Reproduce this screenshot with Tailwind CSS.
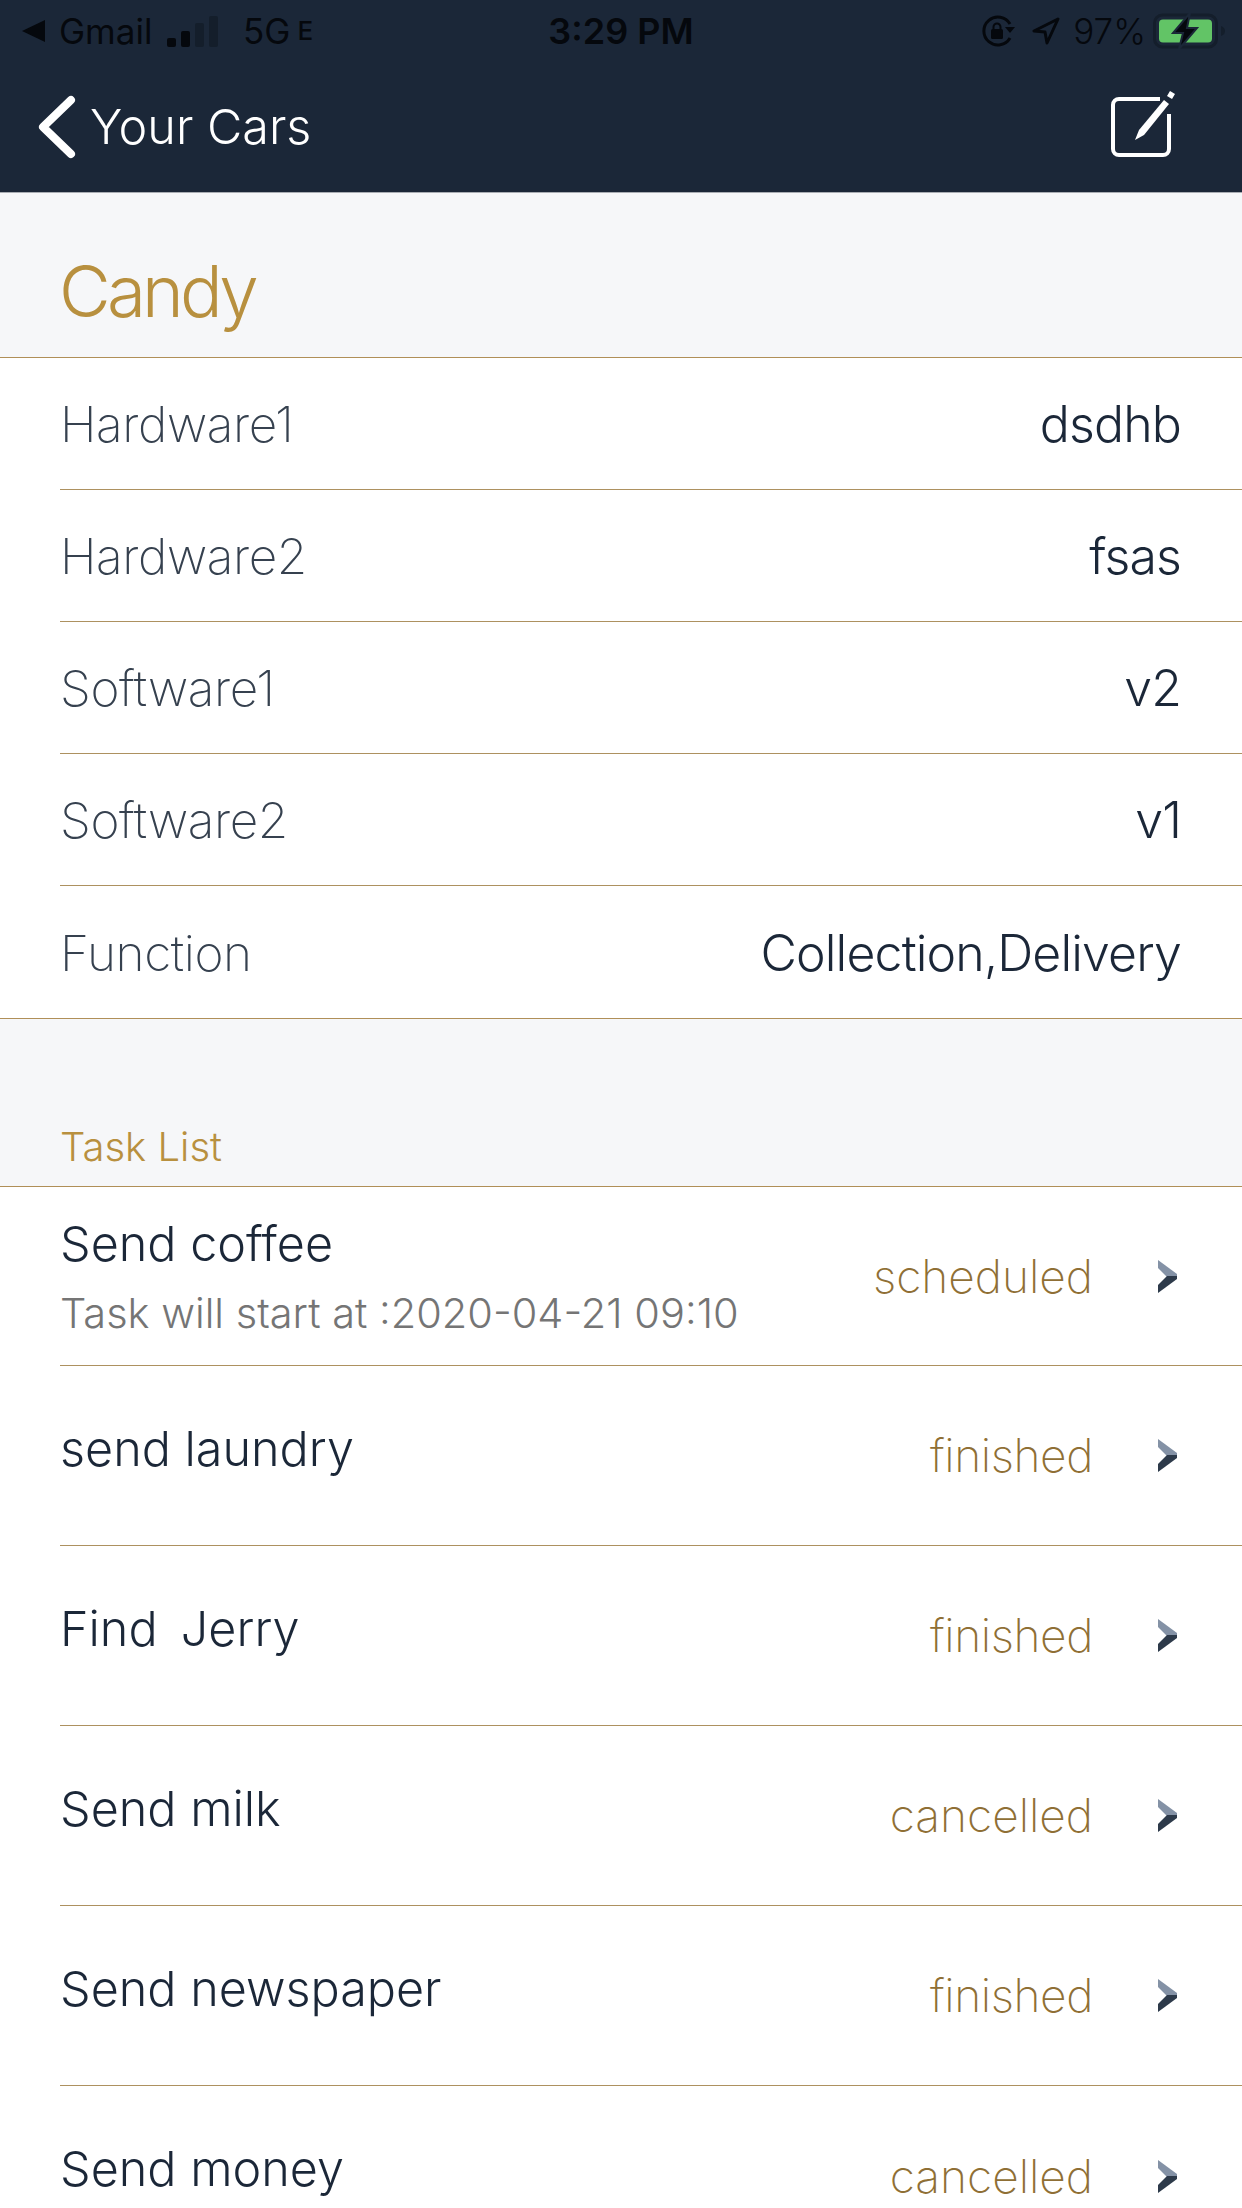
<!DOCTYPE html>
<html lang="en">
<head>
    <meta charset="UTF-8">
    <meta name="viewport" content="width=device-width, initial-scale=1.0">
    <title>Candy</title>
    <script src="https://cdn.jsdelivr.net/npm/@tailwindcss/browser@4"></script>
</head>
<body class="bg-white font-['Inter',sans-serif]">
<div class="w-[1242px] h-[2208px] overflow-hidden flex flex-col">

    <!-- status bar + nav -->
    <header class="bg-[#1b2738] h-[193px] shrink-0 border-b border-[#a9adb3]">
        <div class="h-[62px] pl-[22px] pr-[16px] grid grid-cols-3 items-center text-[#05080d] text-[35px] leading-none">
            <div class="flex items-center">
                <svg width="23" height="22" viewBox="0 0 23 22" class="mr-[14px]"><path d="M0 11 23 0v22z" fill="#05080d"/></svg>
                <span class="w-[93px]">Gmail</span>
                <svg width="51" height="31" viewBox="0 0 51 31" class="ml-[15px]">
                    <rect x="0" y="22" width="9" height="9" rx="2" fill="#05080d"/>
                    <rect x="14" y="15" width="9" height="16" rx="2" fill="#05080d"/>
                    <rect x="28" y="7" width="9" height="24" rx="2" fill="#141e2b"/>
                    <rect x="42" y="0" width="9" height="31" rx="2" fill="#141e2b"/>
                </svg>
                <span class="ml-[25px]">5G</span>
                <span class="ml-[7px] text-[26px] font-medium">E</span>
            </div>
            <div class="text-center font-semibold text-[36px] mr-[6px]">3:29 PM</div>
            <div class="flex items-center justify-end">
                <svg width="34" height="32" viewBox="0 0 34 32" fill="none" class="mr-[16px]">
                    <path d="M28 23A14 14 0 1 1 28 9" stroke="#05080d" stroke-width="3"/>
                    <path d="M28 12l-5 6h10z" fill="#05080d" transform="rotate(180 28 15)"/>
                    <rect x="9" y="14" width="12" height="10" rx="1.5" fill="#05080d"/>
                    <path d="M11.500 14v-2a3.500 3.500 0 0 1 7 0v2" stroke="#05080d" stroke-width="2"/>
                </svg>
                <svg width="28" height="28" viewBox="0 0 28 28" fill="none" class="mr-[13px]">
                    <path d="M26 2 2 14l11 1 2 11z" stroke="#05080d" stroke-width="3" stroke-linejoin="round"/>
                </svg>
                <span class="font-light mr-[7px]">97%</span>
                <svg width="73" height="36" viewBox="0 0 73 36" fill="none">
                    <rect x="1.500" y="2" width="62" height="32" rx="8" stroke="#141e2b" stroke-width="3"/>
                    <rect x="6" y="6.500" width="53" height="23" rx="4" fill="#62c466"/>
                    <path d="M37 0 20 20h10l-4 16 18-21H34z" fill="#05080d" stroke="#1b2738" stroke-width="2"/>
                    <path d="M68 13c3 1 4 3 4 5s-1 4-4 5z" fill="#141e2b"/>
                </svg>
            </div>
        </div>
        <div class="h-[130px] pl-[38px] pr-[66px] flex items-center text-white">
            <svg width="38" height="64" viewBox="0 0 38 64" fill="none">
                <path d="M33 5 5 32l28 27" stroke="#fff" stroke-width="8" stroke-linecap="round" stroke-linejoin="round"/>
            </svg>
            <span class="ml-[14px] text-[48.500px] font-light leading-none">Your Cars</span>
            <svg width="66" height="68" viewBox="0 0 66 68" fill="none" class="ml-auto mt-[-6px]">
                <path d="M50 9H9a6 6 0 0 0-6 6v44a6 6 0 0 0 6 6h44a6 6 0 0 0 6-6V24" stroke="#fff" stroke-width="4"/>
                <path d="M25 50l4-10 25-30 5 4-25 31z" fill="#fff"/>
                <path d="M60 1l5 3-3 5-5-3z" fill="#fff"/>
            </svg>
        </div>
    </header>

    <!-- car name -->
    <div class="bg-[#f6f7f9] h-[165px] shrink-0 pl-[59px] pt-[32px] flex items-center border-b border-[#b08f58]">
        <h1 class="text-[71px] font-light tracking-[-3.8px] text-[#b8903f] leading-none">Candy</h1>
    </div>

    <!-- car details -->
    <div class="shrink-0 pl-[60px]">
        <div class="h-[132px] pt-[2px] pr-[61px] flex items-center justify-between border-b border-[#ad9160]">
            <span class="text-[49.500px] font-extralight tracking-[-0.4px] text-[#36414f]">Hardware1</span>
            <span class="text-[50px] font-light tracking-[-0.85px] text-[#1b2738]">dsdhb</span>
        </div>
        <div class="h-[132px] pt-[2px] pr-[61px] flex items-center justify-between border-b border-[#ad9160]">
            <span class="text-[49.500px] font-extralight tracking-[-0.4px] text-[#36414f]">Hardware2</span>
            <span class="text-[50px] font-light tracking-[-0.85px] text-[#1b2738]">fsas</span>
        </div>
        <div class="h-[132px] pt-[2px] pr-[61px] flex items-center justify-between border-b border-[#ad9160]">
            <span class="text-[49.500px] font-extralight tracking-[-0.4px] text-[#36414f]">Software1</span>
            <span class="text-[50px] font-light tracking-[-0.85px] text-[#1b2738]">v2</span>
        </div>
        <div class="h-[132px] pt-[2px] pr-[61px] flex items-center justify-between border-b border-[#ad9160]">
            <span class="text-[49.500px] font-extralight tracking-[-0.4px] text-[#36414f]">Software2</span>
            <span class="text-[50px] font-light tracking-[-0.85px] text-[#1b2738]">v1</span>
        </div>
    </div>
    <div class="shrink-0 pl-[60px] border-b border-[#b08f58]">
        <div class="h-[132px] pt-[2px] pr-[61px] flex items-center justify-between">
            <span class="text-[49.500px] font-extralight tracking-[-0.4px] text-[#36414f]">Function</span>
            <span class="text-[50px] font-light tracking-[-0.85px] text-[#1b2738]">Collection,Delivery</span>
        </div>
    </div>

    <!-- task list -->
    <div class="bg-[#f6f7f9] h-[168px] shrink-0 pl-[60px] pb-[19px] flex items-end border-b border-[#b08f58]">
        <h2 class="text-[40px] font-light text-[#b8903f] leading-none">Task List</h2>
    </div>

    <div class="pl-[60px]">
        <div class="h-[179px] flex items-center border-b border-[#ad9160]">
            <div class="flex-1">
                <div class="text-[48.500px] font-light text-[#1b2738] leading-none mt-[2px]">Send coffee</div>
                <div class="mt-[25px] text-[41.500px] font-light text-[#757575] leading-none">Task will start at :2020-04-21 09:10</div>
            </div>
            <span class="text-[46px] font-extralight text-[#8f6f35]">scheduled</span>
            <svg width="19" height="33" viewBox="0 0 19 33" class="ml-[65px] mr-[65px]"><path d="M0 0 19 14v3H9L0 8z" fill="#8492a6"/><path d="M19 16v3L0 33v-8l9-9z" fill="#2d3a4a"/></svg>
        </div>
        <div class="h-[180px] flex border-b border-[#ad9160]">
            <div class="flex-1 pt-[59px] text-[48.500px] font-light text-[#1b2738] leading-none">send laundry</div>
            <div class="flex items-center"><span class="text-[46px] font-extralight tracking-[-0.4px] text-[#8f6f35]">finished</span>
            <svg width="19" height="33" viewBox="0 0 19 33" class="ml-[65px] mr-[65px]"><path d="M0 0 19 14v3H9L0 8z" fill="#8492a6"/><path d="M19 16v3L0 33v-8l9-9z" fill="#2d3a4a"/></svg></div>
        </div>
        <div class="h-[180px] flex border-b border-[#ad9160]">
            <div class="flex-1 pt-[59px] text-[48.500px] font-light text-[#1b2738] leading-none whitespace-pre [word-spacing:-2px]">Find  Jerry</div>
            <div class="flex items-center"><span class="text-[46px] font-extralight tracking-[-0.4px] text-[#8f6f35]">finished</span>
            <svg width="19" height="33" viewBox="0 0 19 33" class="ml-[65px] mr-[65px]"><path d="M0 0 19 14v3H9L0 8z" fill="#8492a6"/><path d="M19 16v3L0 33v-8l9-9z" fill="#2d3a4a"/></svg></div>
        </div>
        <div class="h-[180px] flex border-b border-[#ad9160]">
            <div class="flex-1 pt-[59px] text-[48.500px] font-light text-[#1b2738] leading-none">Send milk</div>
            <div class="flex items-center"><span class="text-[46px] font-extralight text-[#8f6f35]">cancelled</span>
            <svg width="19" height="33" viewBox="0 0 19 33" class="ml-[65px] mr-[65px]"><path d="M0 0 19 14v3H9L0 8z" fill="#8492a6"/><path d="M19 16v3L0 33v-8l9-9z" fill="#2d3a4a"/></svg></div>
        </div>
        <div class="h-[180px] flex border-b border-[#ad9160]">
            <div class="flex-1 pt-[59px] text-[48.500px] font-light text-[#1b2738] leading-none">Send newspaper</div>
            <div class="flex items-center"><span class="text-[46px] font-extralight tracking-[-0.4px] text-[#8f6f35]">finished</span>
            <svg width="19" height="33" viewBox="0 0 19 33" class="ml-[65px] mr-[65px]"><path d="M0 0 19 14v3H9L0 8z" fill="#8492a6"/><path d="M19 16v3L0 33v-8l9-9z" fill="#2d3a4a"/></svg></div>
        </div>
        <div class="h-[180px] flex">
            <div class="flex-1 pt-[59px] text-[48.500px] font-light text-[#1b2738] leading-none">Send money</div>
            <div class="flex items-center"><span class="text-[46px] font-extralight text-[#8f6f35]">cancelled</span>
            <svg width="19" height="33" viewBox="0 0 19 33" class="ml-[65px] mr-[65px]"><path d="M0 0 19 14v3H9L0 8z" fill="#8492a6"/><path d="M19 16v3L0 33v-8l9-9z" fill="#2d3a4a"/></svg></div>
        </div>
    </div>
</div>
</body>
</html>
